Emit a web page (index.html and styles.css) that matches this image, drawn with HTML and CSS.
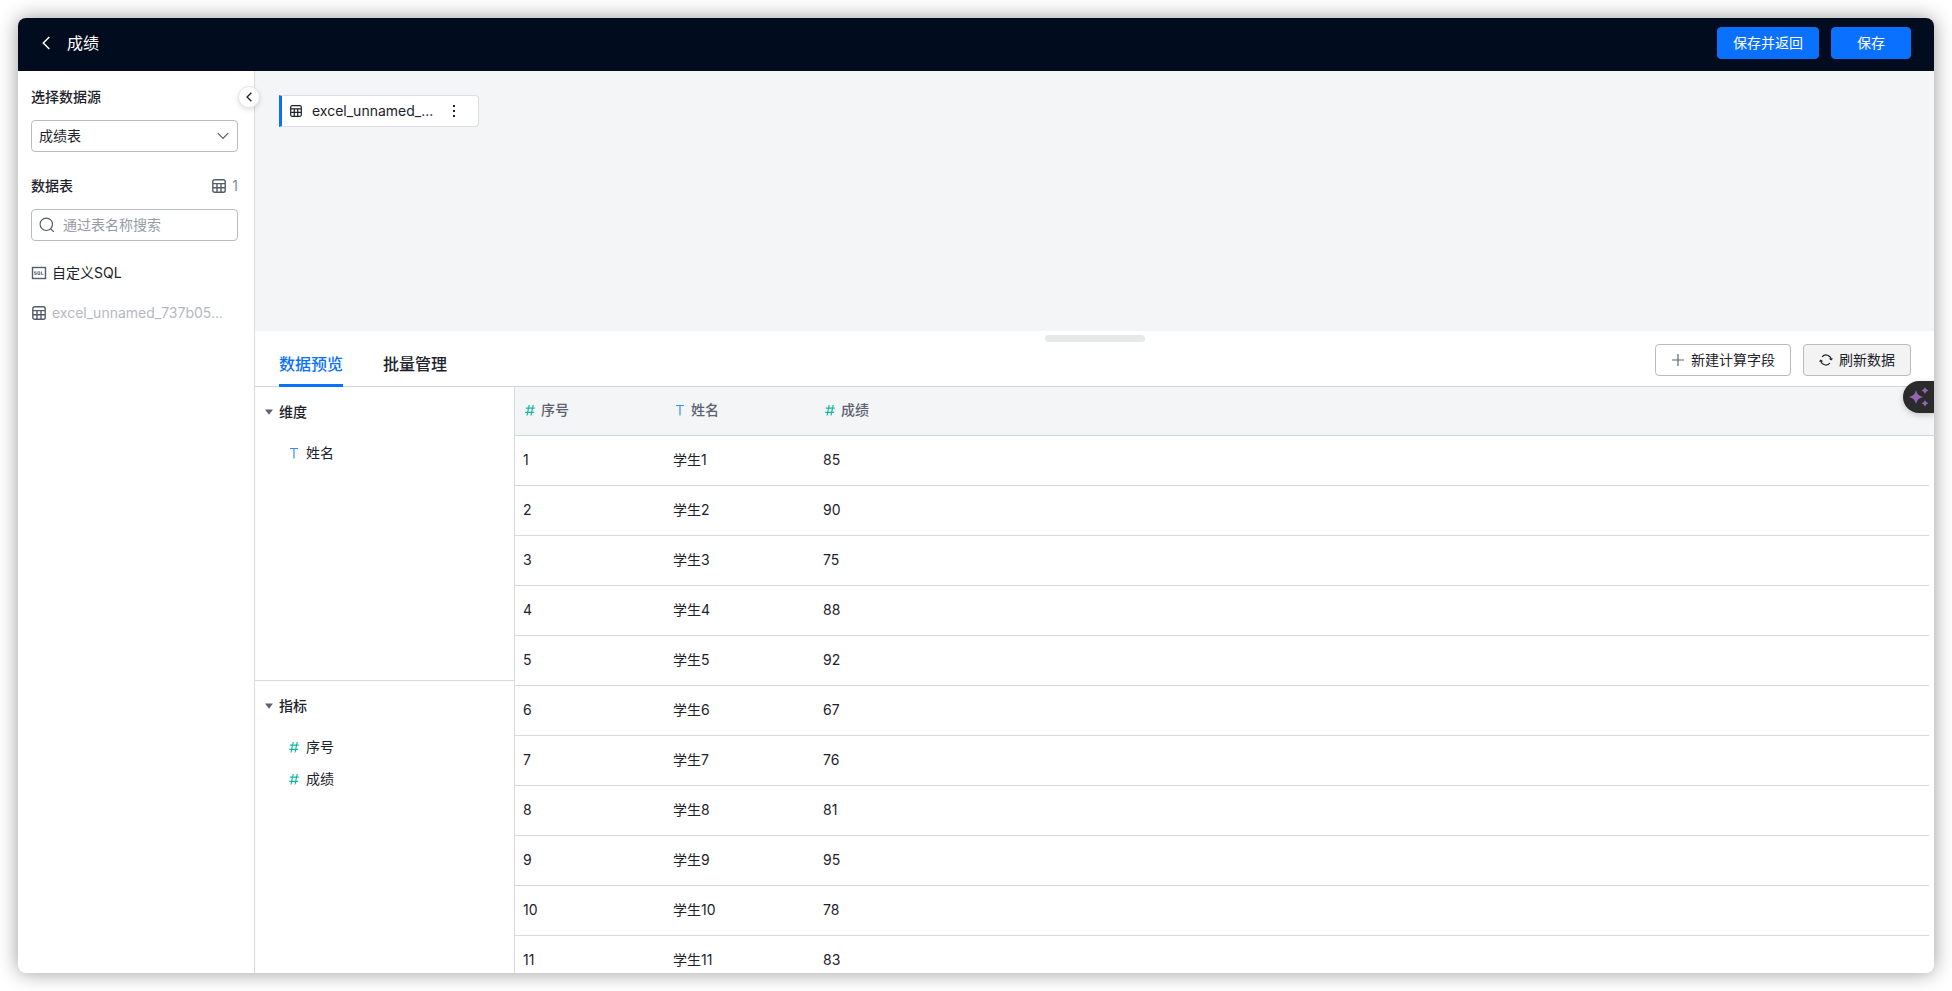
FILE: index.html
```html
<!DOCTYPE html>
<html lang="zh-CN">
<head>
<meta charset="utf-8">
<title>成绩</title>
<link rel="stylesheet" href="styles.css">
</head>
<body>
<svg class="sprite" aria-hidden="true">
  <symbol id="i-table" viewBox="0 0 14 14"><rect x=".8" y=".8" width="12.4" height="12.4" rx="1.8"/><path d="M1 4.600h12M1 8.700h12M5 4.600V13M9 4.600V13"/></symbol>
  <symbol id="i-hash" viewBox="0 0 10 12"><path d="M4.200 1 2 11.500M8.200 1 6 11.500M.8 4.200h9M.2 8.400h9"/></symbol>
  <symbol id="i-text" viewBox="0 0 10 12"><path d="M1 1.500h8M5 1.500V11.500"/></symbol>
  <symbol id="i-left" viewBox="0 0 8 14"><path d="M7.300 1 1.300 7l6 6"/></symbol>
</svg>
<div class="window">
  <header class="topbar">
    <button class="back" aria-label="返回"><svg class="icon back-icon"><use href="#i-left"/></svg></button>
    <h1 class="title">成绩</h1>
    <div class="actions">
      <button class="btn primary">保存并返回</button>
      <button class="btn primary save">保存</button>
    </div>
  </header>
  <div class="body">
    <aside class="sidebar">
      <button class="collapse" aria-label="收起"><svg class="icon collapse-icon"><use href="#i-left"/></svg></button>
      <label class="label" for="source">选择数据源</label>
      <div class="field">
        <select id="source" class="control"><option>成绩表</option></select>
        <svg class="icon chevron" viewBox="0 0 12 8"><path d="m.8 1.200 5.200 5.200 5.200-5.200"/></svg>
      </div>
      <div class="label-row">
        <label class="label" for="search">数据表</label>
        <span class="count"><svg class="icon table-icon"><use href="#i-table"/></svg>1</span>
      </div>
      <div class="field">
        <svg class="icon search-icon" viewBox="0 0 16 16"><circle cx="7.300" cy="7.300" r="6.200"/><path d="m11.800 11.800 3 3"/></svg>
        <input id="search" class="control search" type="text" placeholder="通过表名称搜索">
      </div>
      <ul class="sources">
        <li class="source"><svg class="icon table-icon" viewBox="0 0 14 14"><rect x=".5" y="1.500" width="13" height="11"/><path class="thin" d="M4.400 5.800H2.500v1.300h1.900v1.300H2.400M5.800 5.800h2v2.600h-2zM7.200 7.600l1 1.400M9.500 5.400v3h2"/></svg>自定义SQL</li>
        <li class="source used"><svg class="icon table-icon"><use href="#i-table"/></svg><span>excel_unnamed_737b05...</span></li>
      </ul>
    </aside>
    <main class="main">
      <section class="canvas">
        <div class="node">
          <svg class="icon node-icon"><use href="#i-table"/></svg>
          <span class="node-name">excel_unnamed_...</span>
          <button class="more" aria-label="更多"><svg class="dots" viewBox="0 0 4 12"><path d="M1 0h2v2H1zM1 5h2v2H1zM1 10h2v2H1z"/></svg></button>
        </div>
      </section>
      <section class="panel">
        <div class="handle"></div>
        <div class="panel-head">
          <nav class="tabs">
            <button class="tab active">数据预览</button>
            <button class="tab">批量管理</button>
          </nav>
          <div class="actions">
            <button class="btn"><svg class="icon btn-icon plus" viewBox="0 0 12 12"><path d="M0 6h12M6 0v12"/></svg>新建计算字段</button>
            <button class="btn muted"><svg class="icon btn-icon" viewBox="0 0 12 12"><path d="M9.900 9.200A5.200 5.200 0 0 1 .8 6.500M2.100 2.800A5.200 5.200 0 0 1 11.200 5.500"/><path d="M-.4 7.600.8 6.200l1.600 1.200M12.400 4.400 11.200 5.800 9.600 4.600"/></svg>刷新数据</button>
          </div>
        </div>
        <div class="panel-body">
          <div class="groups">
            <div class="group">
              <h2 class="group-title"><svg class="caret" viewBox="0 0 8 6"><path d="M0 .5h8L4 5.800z"/></svg>维度</h2>
              <ul class="list"><li class="item"><svg class="icon type text"><use href="#i-text"/></svg>姓名</li></ul>
            </div>
            <div class="group">
              <h2 class="group-title"><svg class="caret" viewBox="0 0 8 6"><path d="M0 .5h8L4 5.800z"/></svg>指标</h2>
              <ul class="list">
                <li class="item"><svg class="icon type number"><use href="#i-hash"/></svg>序号</li>
                <li class="item"><svg class="icon type number"><use href="#i-hash"/></svg>成绩</li>
              </ul>
            </div>
          </div>
          <div class="grid">
            <table class="data">
              <thead><tr>
                <th class="col"><span class="head"><svg class="icon type number"><use href="#i-hash"/></svg>序号</span></th>
                <th class="col"><span class="head"><svg class="icon type text"><use href="#i-text"/></svg>姓名</span></th>
                <th><span class="head"><svg class="icon type number"><use href="#i-hash"/></svg>成绩</span></th>
                <th class="gutter"></th>
              </tr></thead>
              <tbody>
                <tr><td>1</td><td>学生1</td><td>85</td></tr>
                <tr><td>2</td><td>学生2</td><td>90</td></tr>
                <tr><td>3</td><td>学生3</td><td>75</td></tr>
                <tr><td>4</td><td>学生4</td><td>88</td></tr>
                <tr><td>5</td><td>学生5</td><td>92</td></tr>
                <tr><td>6</td><td>学生6</td><td>67</td></tr>
                <tr><td>7</td><td>学生7</td><td>76</td></tr>
                <tr><td>8</td><td>学生8</td><td>81</td></tr>
                <tr><td>9</td><td>学生9</td><td>95</td></tr>
                <tr><td>10</td><td>学生10</td><td>78</td></tr>
                <tr><td>11</td><td>学生11</td><td>83</td></tr>
              </tbody>
            </table>
          </div>
        </div>
        <button class="assistant" aria-label="智能助手"><svg class="sparkle" viewBox="0 0 20 20"><path d="M7 3q1.200 5.800 7 7-5.800 1.200-7 7-1.200-5.800-7-7 5.800-1.200 7-7zM16 0q.7 3 3.500 3.500-2.800.500-3.500 3.500-.700-3-3.500-3.500 2.800-.500 3.500-3.500zM16 13q.7 2.800 3.500 3.300-2.800.500-3.500 3.500-.700-3-3.500-3.500 2.800-.500 3.500-3.300z"/></svg></button>
      </section>
    </main>
  </div>
</div>
</body>
</html>
```
FILE: styles.css
```css
* { box-sizing: border-box; }
body {
  margin: 0;
  height: 100vh;
  padding: 18px;
  overflow: hidden;
  background: #fff;
  color: #1d222b;
  font: 14px/20px Inter, "Noto Sans CJK SC", sans-serif;
}
button, select, input { font: inherit; color: inherit; margin: 0; }
button { cursor: pointer; padding: 0; border: 0; background: none; }
ul { list-style: none; margin: 0; padding: 0; }
h1, h2 { margin: 0; }
.sprite { position: absolute; width: 0; height: 0; }
.icon { fill: none; stroke: currentColor; stroke-width: 1.2; flex: none; display: block; overflow: visible; }

.window {
  height: 100%;
  display: flex;
  flex-direction: column;
  overflow: hidden;
  border-radius: 8px;
  background: #fff;
  box-shadow: 0 0 20px rgba(0, 0, 0, .4);
}
.topbar {
  flex: none;
  display: flex;
  align-items: center;
  padding: 9px 23px 12px 20px;
  background: #010c1e;
  color: #fff;
}
.back { width: 16px; height: 24px; display: grid; place-items: center; }
.back-icon { width: 8px; height: 14px; stroke-width: 1.5; }
.title { margin-left: 13px; font-size: 16px; line-height: 24px; font-weight: 400; }
.actions { display: flex; gap: 12px; margin-left: auto; }
.btn {
  height: 32px;
  padding: 0 15px;
  display: flex;
  align-items: center;
  justify-content: center;
  border: 1px solid #b9bbc2;
  border-radius: 4px;
  background: #fff;
  white-space: nowrap;
}
.btn.primary { background: #0a70ff; border-color: #0a70ff; }
.btn.save { width: 80px; }
.btn.muted { background: #f3f3f3; }
.btn-icon { width: 12px; height: 12px; margin: 0 7px 0 1px; }
.plus { stroke: #5c6370; }

.body { flex: 1; min-height: 0; display: flex; }
.sidebar {
  position: relative;
  flex: none;
  width: 237px;
  padding: 16px 16px 0 13px;
  border-right: 1px solid #d9dadd;
}
.collapse {
  position: absolute;
  top: 15px;
  right: -6px;
  width: 22px;
  height: 22px;
  display: grid;
  place-items: center;
  border-radius: 50%;
  border: 1px solid #e3e4e6;
  background: #fff;
  box-shadow: 0 2px 5px rgba(0, 0, 0, .12);
  z-index: 1;
}
.collapse-icon { width: 6px; height: 10px; stroke-width: 1.8; }
.label { display: block; font-weight: 500; }
.label-row { display: flex; justify-content: space-between; align-items: center; margin-top: 24px; }
.count { display: flex; align-items: center; gap: 6px; color: #868c98; }
.table-icon { width: 14px; height: 14px; color: #555c69; stroke-width: 1.4; }
.field { position: relative; margin-top: 13px; }
.control {
  display: block;
  width: 100%;
  height: 32px;
  padding: 0 7px;
  border: 1px solid #b9bbc2;
  border-radius: 4px;
  background: #fff;
  appearance: none;
}
.search { padding: 0 7px 2px 31px; }
.search::placeholder { color: #969ba5; }
.chevron { position: absolute; right: 9px; top: 12px; width: 12px; height: 8px; color: #555c69; pointer-events: none; }
.search-icon { position: absolute; left: 8px; top: 8px; width: 16px; height: 16px; color: #555c69; }
.sources { margin-top: 12px; }
.source { height: 40px; padding: 0 0 0 1px; display: flex; align-items: center; gap: 6px; white-space: nowrap; }
.used { color: #b5b8bf; }
.thin { stroke-width: .8; }

.main { flex: 1; min-width: 0; display: flex; flex-direction: column; }
.canvas { flex: none; height: 260px; padding: 24px; background: #f4f5f7; }
.node {
  width: 200px;
  height: 32px;
  padding: 0 22px 0 8px;
  display: flex;
  align-items: center;
  border: 1px solid #dcdee3;
  border-left: 3px solid #0a70ff;
  border-radius: 0 4px 4px 0;
  background: #fff;
}
.node-icon { width: 12px; height: 12px; stroke-width: 1.4; }
.node-name { margin-left: 10px; }
.more { margin-left: auto; }
.dots { display: block; width: 4px; height: 12px; fill: #1d222b; }

.panel { position: relative; flex: 1; min-height: 0; display: flex; flex-direction: column; }
.handle { position: absolute; top: 4px; left: 50%; margin-left: -50px; width: 100px; height: 7px; border-radius: 4px; background: #e7e9e8; }
.panel-head {
  flex: none;
  height: 56px;
  padding: 0 23px 0 24px;
  display: flex;
  align-items: flex-start;
  border-bottom: 1px solid #d3d5d8;
}
.panel-head .actions { margin-top: 13px; }
.tabs { display: flex; gap: 40px; }
.tab {
  height: 56px;
  padding: 13px 0 0;
  border-bottom: 3px solid transparent;
  font-size: 16px;
  font-weight: 500;
}
.tab.active { color: #0a70ff; border-color: #0a70ff; }
.panel-body { flex: 1; min-height: 0; display: flex; }
.groups { flex: none; width: 260px; display: flex; flex-direction: column; border-right: 1px solid #d9dadd; }
.group { flex: 1; padding: 9px 0 0 10px; }
.group:first-child { border-bottom: 1px solid #d9dadd; }
.group-title { display: flex; align-items: center; gap: 6px; height: 32px; font-size: 14px; font-weight: 500; }
.caret { width: 8px; height: 6px; fill: #5c6370; }
.list { padding: 9px 0 0 24px; }
.item { display: flex; align-items: center; gap: 7px; height: 32px; }
.type { width: 10px; height: 12px; }
.number { color: #14b8a0; }
.text { color: #3b8cff; }

.grid { flex: 1; min-width: 0; overflow: hidden; }
.data { width: 100%; table-layout: fixed; border-collapse: separate; border-spacing: 0; }
.data th, .data td { padding: 0 8px 2px; text-align: left; }
.data th { height: 49px; background: #f4f5f7; border-bottom: 1px solid #d3d5d8; color: #5c6370; font-weight: 500; }
.data td { height: 50px; border-bottom: 1px solid #d9dadd; }
.data .col { width: 150px; }
.data .gutter { width: 5px; padding: 0; }
.head { display: flex; align-items: center; gap: 6px; padding-left: 2px; }

.assistant {
  position: absolute;
  top: 50px;
  right: 0;
  width: 31px;
  height: 32px;
  padding-left: 6px;
  border-radius: 16px 0 0 16px;
  background: #2b2b2b;
  box-shadow: 0 2px 6px rgba(0, 0, 0, .2);
}
.sparkle { display: block; width: 20px; height: 20px; fill: #9763b5; }
```
